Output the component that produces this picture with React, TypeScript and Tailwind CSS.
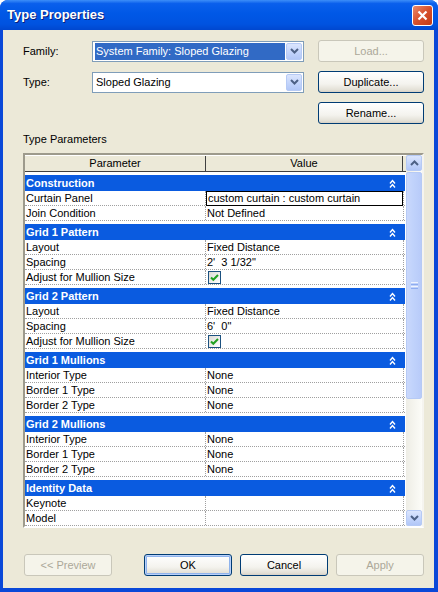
import type { ReactNode } from 'react';

type Row = { name: string; value?: string; check?: boolean; editing?: boolean };
type Group = { name: string; rows: Row[] };

const GROUPS: Group[] = [
  {
    name: 'Construction',
    rows: [
      { name: 'Curtain Panel', value: 'custom curtain : custom curtain', editing: true },
      { name: 'Join Condition', value: 'Not Defined' },
    ],
  },
  {
    name: 'Grid 1 Pattern',
    rows: [
      { name: 'Layout', value: 'Fixed Distance' },
      { name: 'Spacing', value: `2'  3 1/32"` },
      { name: 'Adjust for Mullion Size', check: true },
    ],
  },
  {
    name: 'Grid 2 Pattern',
    rows: [
      { name: 'Layout', value: 'Fixed Distance' },
      { name: 'Spacing', value: `6'  0"` },
      { name: 'Adjust for Mullion Size', check: true },
    ],
  },
  {
    name: 'Grid 1 Mullions',
    rows: [
      { name: 'Interior Type', value: 'None' },
      { name: 'Border 1 Type', value: 'None' },
      { name: 'Border 2 Type', value: 'None' },
    ],
  },
  {
    name: 'Grid 2 Mullions',
    rows: [
      { name: 'Interior Type', value: 'None' },
      { name: 'Border 1 Type', value: 'None' },
      { name: 'Border 2 Type', value: 'None' },
    ],
  },
  {
    name: 'Identity Data',
    rows: [
      { name: 'Keynote', value: '' },
      { name: 'Model', value: '' },
    ],
  },
];

function Chevron({ up = false, className = '' }: { up?: boolean; className?: string }) {
  return (
    <svg width="9" height="6" viewBox="0 0 9 6" className={className}>
      <path
        d={up ? 'M1 5 L4.5 1.5 L8 5' : 'M1 1 L4.5 4.5 L8 1'}
        fill="none"
        stroke="#4d6185"
        strokeWidth="2"
      />
    </svg>
  );
}

function DoubleUp() {
  return (
    <svg width="7" height="9" viewBox="0 0 7 9">
      <path d="M1 4.5 L3.5 1.5 L6 4.5 M1 8.5 L3.5 5.5 L6 8.5" fill="none" stroke="#fff" strokeWidth="1.4" />
    </svg>
  );
}

function Button({
  children,
  disabled = false,
  isDefault = false,
  className = '',
}: {
  children: ReactNode;
  disabled?: boolean;
  isDefault?: boolean;
  className?: string;
}) {
  if (disabled) {
    return (
      <div
        className={`flex h-[22px] items-center justify-center rounded-[3px] border border-[#c9c7ba] bg-[#f5f4ea] text-[#aca899] ${className}`}
      >
        {children}
      </div>
    );
  }
  return (
    <div
      className={`flex h-[22px] items-center justify-center rounded-[3px] border border-[#003c74] bg-[linear-gradient(#ffffff,#f4f3ee_60%,#e3e0d6_90%,#d6d0c5)] text-black ${
        isDefault ? 'shadow-[inset_0_0_0_1px_#b9d1fa,inset_0_0_0_2px_#8fb3ec]' : ''
      } ${className}`}
    >
      {children}
    </div>
  );
}

function Combo({ text, selected = false }: { text: string; selected?: boolean }) {
  return (
    <div className="flex h-[21px] w-[212px] items-center border border-[#7f9db9] bg-white pl-[2px] pr-px">
      <div
        className={`flex h-[17px] flex-1 items-center px-px ${
          selected ? 'bg-[#316ac5] text-white' : 'text-black'
        }`}
      >
        {text}
      </div>
      <div className="ml-[1px] flex h-[17px] w-[16px] items-center justify-center rounded-[2px] border border-[#b6caf5] bg-[linear-gradient(#dbe5fd,#c1d3fb_60%,#b2c7f7)]">
        <Chevron />
      </div>
    </div>
  );
}

function ScrollButton({ up }: { up?: boolean }) {
  return (
    <div className="flex h-[16px] w-[16px] items-center justify-center rounded-[2px] border border-[#b6caf5] bg-[linear-gradient(#dbe5fd,#c1d3fb_60%,#b2c7f7)]">
      <Chevron up={up} />
    </div>
  );
}

function CheckBox() {
  return (
    <div className="ml-[2px] flex h-[13px] w-[13px] items-center justify-center border border-[#1c5180] bg-[linear-gradient(135deg,#dcdbd5,#ffffff)]">
      <svg width="9" height="9" viewBox="0 0 9 9">
        <path d="M1 4.5 L3.3 6.8 L8 2" fill="none" stroke="#21a121" strokeWidth="2" />
      </svg>
    </div>
  );
}

function ParamRow({ row }: { row: Row }) {
  return (
    <div className="flex h-[15px] w-[380px] border-b border-dotted border-[#a0a0a0]">
      <div className="w-[180px] truncate pl-px leading-[14px]">{row.name}</div>
      <div className="flex w-[199px] items-center border-r border-l border-dotted border-[#a0a0a0]">
        {row.check ? (
          <CheckBox />
        ) : row.editing ? (
          <div className="h-[15px] flex-1 border border-black pl-px leading-[13px]">{row.value}</div>
        ) : (
          <div className="whitespace-pre pl-px leading-[14px]">{row.value}</div>
        )}
      </div>
    </div>
  );
}

function GroupBlock({ group }: { group: Group }) {
  return (
    <div className="pt-[3px]">
      <div className="flex h-[16px] w-[380px] items-center justify-between bg-[#0a5be0] pl-px pr-[9px] font-bold text-white">
        <span>{group.name}</span>
        <DoubleUp />
      </div>
      {group.rows.map((r, i) => (
        <ParamRow key={i} row={r} />
      ))}
    </div>
  );
}

export default function App() {
  return (
    <div className="flex h-[592px] w-[438px] flex-col overflow-hidden rounded-t-[8px] bg-[#0a48d8] font-['Liberation_Sans',Arial,sans-serif] text-[11px] text-black">
      {/* Title bar */}
      <div className="flex h-[30px] shrink-0 items-center justify-between bg-[linear-gradient(#3d8ef8,#0a5fec_12%,#0058e6_45%,#0053e0_80%,#0047cf)] pr-[5px] pl-[7px]">
        <span className="text-[13px] font-bold text-white [text-shadow:1px_1px_0_#0a1e78]">
          Type Properties
        </span>
        <div className="flex h-[21px] w-[21px] items-center justify-center rounded-[3px] border border-white bg-[linear-gradient(135deg,#e98a6c,#d7502c_50%,#c23a15)]">
          <svg width="11" height="11" viewBox="0 0 11 11">
            <path d="M1.5 1.5 L9.5 9.5 M9.5 1.5 L1.5 9.5" stroke="#fff" strokeWidth="2.2" />
          </svg>
        </div>
      </div>

      {/* Body */}
      <div className="mr-[4px] mb-[4px] ml-[3px] flex flex-1 flex-col bg-[#ece9d8] pt-[10px] pr-[10px] pl-[20px]">
        <div className="flex items-center">
          <div className="w-[69px]">Family:</div>
          <Combo text="System Family: Sloped Glazing" selected />
          <Button disabled className="ml-[14px] w-[106px]">
            Load...
          </Button>
        </div>
        <div className="mt-[9px] flex items-center">
          <div className="w-[69px]">Type:</div>
          <Combo text="Sloped Glazing" />
          <Button className="ml-[14px] w-[106px]">Duplicate...</Button>
        </div>
        <div className="mt-[9px] flex">
          <Button className="ml-[295px] w-[106px]">Rename...</Button>
        </div>

        <div className="mt-[9px] h-[13px] leading-[13px]">Type Parameters</div>

        {/* Parameter grid */}
        <div className="mt-[7px] flex h-[375px] w-[401px] border-2 border-t-[#9d9a8c] border-r-[#f5f4ef] border-b-[#ffffff] border-l-[#9d9a8c] bg-white">
          <div className="h-full w-[381px] overflow-hidden bg-white">
            <div className="flex h-[17px] w-[381px] border-t border-b border-t-white border-b-[#404040] bg-[#ece9d8]">
              <div className="flex w-[180px] items-center justify-center">Parameter</div>
              <div className="flex w-[198px] items-center justify-center border-r border-l border-[#404040]">
                Value
              </div>
            </div>
            {GROUPS.map(g => (
              <GroupBlock key={g.name} group={g} />
            ))}
          </div>
          <div className="flex w-[16px] flex-col bg-[linear-gradient(to_right,#eeede5,#fcfcf8)]">
            <ScrollButton up />
            <div className="flex-1 pt-px">
              <div className="flex h-[227px] w-[16px] items-center justify-center rounded-[2px] border border-[#b6caf5] bg-[linear-gradient(to_right,#cad8fc,#c1d3fb_40%,#b8cbf9)]">
                <div className="flex w-[7px] flex-col gap-px">
                  <div className="h-px bg-[#eef3fe]" />
                  <div className="h-px bg-[#8eacf0]" />
                  <div className="h-px bg-[#eef3fe]" />
                  <div className="h-px bg-[#8eacf0]" />
                </div>
              </div>
            </div>
            <ScrollButton />
          </div>
        </div>

        {/* Footer */}
        <div className="mt-[26px] flex">
          <Button disabled className="ml-px w-[88px]">
            &lt;&lt; Preview
          </Button>
          <Button isDefault className="ml-[32px] w-[88px]">
            OK
          </Button>
          <Button className="ml-[8px] w-[88px]">Cancel</Button>
          <Button disabled className="ml-[8px] w-[88px]">
            Apply
          </Button>
        </div>
      </div>
    </div>
  );
}
